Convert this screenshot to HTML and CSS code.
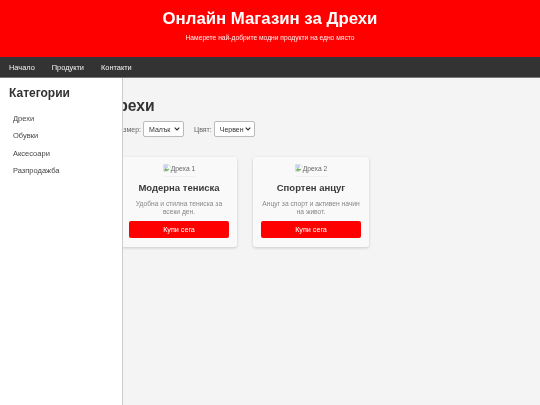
FILE: index.html
```html
<!DOCTYPE html>
<html lang="bg">
<head>
<meta charset="utf-8">
<title>Онлайн Магазин за Дрехи</title>
<link rel="stylesheet" href="styles.css">
</head>
<body>
<header class="hero">
  <h1>Онлайн Магазин за Дрехи</h1>
  <p>Намерете най-добрите модни продукти на едно място</p>
</header>
<nav class="topnav">
  <a href="#">Начало</a>
  <a href="#">Продукти</a>
  <a href="#">Контакти</a>
</nav>
<div class="page">
  <aside class="sidebar">
    <h2>Категории</h2>
    <ul>
      <li><a href="#">Дрехи</a></li>
      <li><a href="#">Обувки</a></li>
      <li><a href="#">Аксесоари</a></li>
      <li><a href="#">Разпродажба</a></li>
    </ul>
  </aside>
  <main class="content">
    <h2>Дрехи</h2>
    <div class="filters">
      <label>Размер: <select><option>Малък</option></select></label>
      <label>Цвят: <select><option>Червен</option></select></label>
    </div>
    <div class="grid">
      <article class="card">
        <div class="pic"><span class="pic-box"><svg class="broken" viewBox="0 0 16 16"><path d="M1.500 1.500h9l4 4v9h-13z" fill="#fff" stroke="#a9a9a9"/><path d="M2.500 2.500h7v6h-7z" fill="#bcd0f0"/><path d="M2.500 11l3-3 3 3 2-2 3 3v1.500h-11z" fill="#6fae5a"/><path d="M8 16L16 6v10z" fill="#f9f9f9"/></svg>Дреха 1</span></div>
        <h3>Модерна тениска</h3>
        <p>Удобна и стилна тениска за всеки ден.</p>
        <button type="button">Купи сега</button>
      </article>
      <article class="card">
        <div class="pic"><span class="pic-box"><svg class="broken" viewBox="0 0 16 16"><path d="M1.500 1.500h9l4 4v9h-13z" fill="#fff" stroke="#a9a9a9"/><path d="M2.500 2.500h7v6h-7z" fill="#bcd0f0"/><path d="M2.500 11l3-3 3 3 2-2 3 3v1.500h-11z" fill="#6fae5a"/><path d="M8 16L16 6v10z" fill="#f9f9f9"/></svg>Дреха 2</span></div>
        <h3>Спортен анцуг</h3>
        <p>Анцуг за спорт и активен начин на живот.</p>
        <button type="button">Купи сега</button>
      </article>
    </div>
  </main>
</div>
</body>
</html>
```
FILE: styles.css
```css
* { box-sizing: border-box; }
html, body { height: 100%; }
body {
  margin: 0;
  background: #f4f4f4;
  color: #333;
  font-family: "Liberation Sans", Arial, sans-serif;
  display: flex;
  flex-direction: column;
  overflow: hidden;
  will-change: transform;
}
.hero {
  height: 57px;
  background: #ff0000;
  color: #fff;
  text-align: center;
  padding-top: 9px;
}
.hero h1 { margin: 0; font-size: 16.800px; line-height: 20px; font-weight: 700; }
.hero p { margin: 4px 0 0; font-size: 6.700px; line-height: 9px; color: #ffecec; }
.topnav {
  height: 21px;
  background: #333;
  display: flex;
  align-items: center;
  gap: 17px;
  padding-left: 9px;
  border-bottom: 1px solid #777;
}
.topnav a { color: #f2f2f2; text-decoration: none; font-size: 7.400px; }
.page { position: relative; flex: 1; }
.sidebar {
  position: absolute;
  left: 0;
  top: 0;
  bottom: 0;
  width: 123px;
  background: #fff;
  border-right: 1px solid #ccc;
  padding: 8px 9px;
  z-index: 2;
}
.sidebar h2 { margin: 0 0 9px; font-size: 12px; line-height: 15px; }
.sidebar ul { margin: 0; padding: 0 0 0 4px; list-style: none; }
.sidebar li { height: 17.300px; display: flex; align-items: center; }
.sidebar a { color: #444; text-decoration: none; font-size: 7.500px; }
.content { padding: 19px 20px 0 107px; }
.content h2 { margin: 0 0 7px; font-size: 15.700px; line-height: 17px; }
.filters { display: flex; gap: 10px; margin: 0 0 20px 8px; }
.filters label { font-size: 7px; color: #666; display: flex; align-items: center; gap: 2px; }
.filters select {
  appearance: none;
  width: 41px;
  height: 16px;
  padding: 0 0 0 5px;
  font-family: inherit;
  font-size: 7px;
  color: #333;
  background: #fff url("data:image/svg+xml,%3Csvg xmlns='http://www.w3.org/2000/svg' width='6' height='4'%3E%3Cpath d='M.7.7l2.300 2.300L5.300.7' fill='none' stroke='%23333' stroke-width='1.200'/%3E%3C/svg%3E") no-repeat right 3px center;
  border: 1px solid #bbb;
  border-radius: 2px;
}
.grid { display: flex; gap: 16px; margin-left: 14px; }
.card {
  width: 116px;
  height: 90px;
  background: #f9f9f9;
  border-radius: 3px;
  box-shadow: 0 1px 3px rgba(0,0,0,.18);
  padding: 6px 8px;
  text-align: center;
}
.pic { display: flex; justify-content: center; height: 14px; }
.pic-box {
  display: flex;
  align-items: center;
  height: 14px;
  padding-bottom: 3px;
  font-size: 6.700px;
  color: #666;
  border-bottom: 1px solid #f1f1f1;
}
.broken { width: 8px; height: 8px; flex: none; }
.card h3 { margin: 5px 0 0; font-size: 9.500px; line-height: 12px; color: #3a3a3a; }
.card p { margin: 6px 0 0; font-size: 6.700px; line-height: 8px; color: #888; }
.card button {
  width: 100%;
  height: 17px;
  margin-top: 5px;
  border: 0;
  border-radius: 2px;
  background: #ff0000;
  color: #fff;
  font-family: inherit;
  font-size: 7.200px;
}
```
